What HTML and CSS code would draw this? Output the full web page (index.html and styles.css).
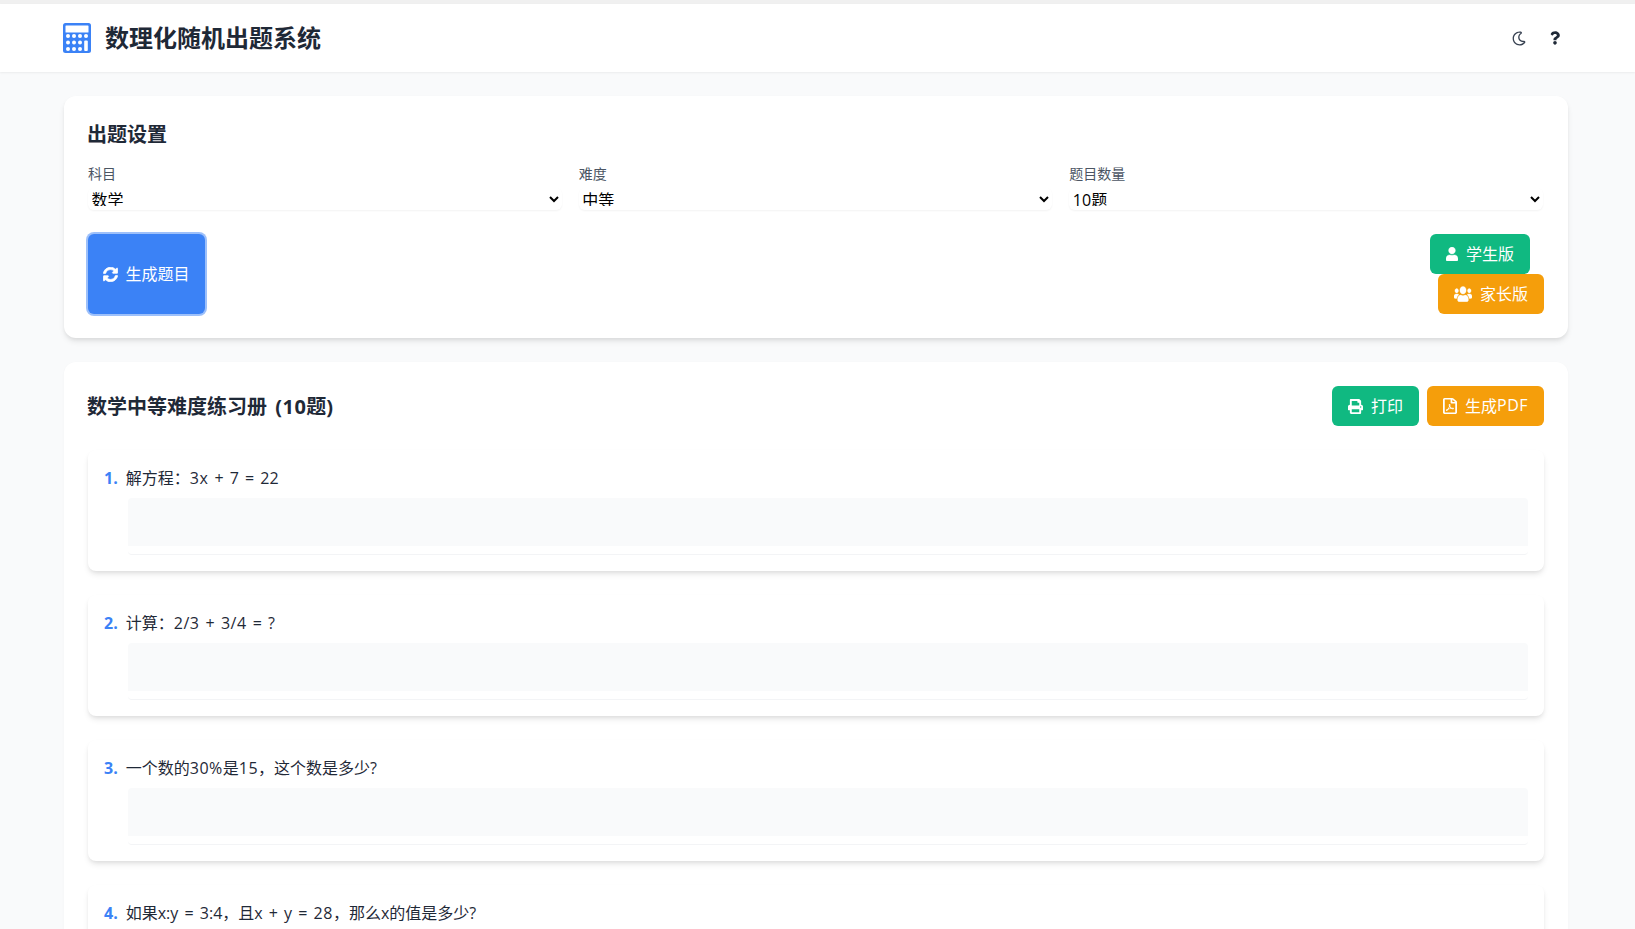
FILE: index.html
```html
<!DOCTYPE html>
<html lang="zh-CN">
<head>
<meta charset="utf-8">
<title>数理化随机出题系统</title>
<link rel="stylesheet" href="styles.css">
</head>
<body>
<div class="topstrip"></div>
<header class="site-header">
  <div class="brand">
    <svg class="brand-icon" viewBox="0 0 28 30"><rect class="calc-body" width="28" height="30" rx="2.500"/><rect class="calc-face" x="2.500" y="2.500" width="23" height="7" rx=".6"/><g class="calc-face"><circle cx="5" cy="13" r="2"/><circle cx="11" cy="13" r="2"/><circle cx="17" cy="13" r="2"/><circle cx="23" cy="13" r="2"/><circle cx="5" cy="19.500" r="2"/><circle cx="11" cy="19.500" r="2"/><circle cx="17" cy="19.500" r="2"/><circle cx="5" cy="26" r="2"/><circle cx="11" cy="26" r="2"/><circle cx="17" cy="26" r="2"/><rect x="21.200" y="17.600" width="3.600" height="10.300" rx="1"/></g></svg>
    <h1 class="brand-title">数理化随机出题系统</h1>
  </div>
  <div class="header-tools">
    <svg class="tool-moon" viewBox="0 0 512 512"><path d="M279.135 512c78.756 0 150.982-35.804 198.844-94.775 28.27-34.831-2.558-85.722-46.249-77.401-82.348 15.683-158.272-47.268-158.272-130.792 0-48.424 26.06-92.292 67.434-115.836 38.745-22.05 28.999-80.788-15.022-88.919A257.936 257.936 0 0 0 279.135 0c-141.36 0-256 114.575-256 256 0 141.36 114.576 256 256 256zm0-464c12.985 0 25.689 1.201 38.016 3.478-54.76 31.163-91.693 90.042-91.693 157.554 0 113.848 103.641 199.2 215.252 177.944C402.574 433.964 344.366 464 279.135 464c-114.875 0-208-93.125-208-208s93.125-208 208-208z"/></svg>
    <svg class="tool-help" viewBox="0 0 384 512"><path d="M202.021 0C122.202 0 70.503 32.703 29.914 91.026c-7.363 10.58-5.093 25.086 5.178 32.874l43.138 32.709c10.373 7.865 25.132 6.026 33.253-4.148 25.049-31.381 43.63-49.449 82.757-49.449 30.764 0 68.816 19.799 68.816 49.631 0 22.552-18.617 34.134-48.993 51.164-35.423 19.86-82.299 44.576-82.299 106.405V320c0 13.255 10.745 24 24 24h72.471c13.255 0 24-10.745 24-24v-5.773c0-42.86 125.268-44.645 125.268-160.627C377.504 66.256 286.902 0 202.021 0zM192 373.459c-38.196 0-69.271 31.075-69.271 69.271 0 38.195 31.075 69.27 69.271 69.27s69.271-31.075 69.271-69.271-31.075-69.27-69.271-69.27z"/></svg>
  </div>
</header>
<main class="page">
  <section class="card settings">
    <h2 class="card-title">出题设置</h2>
    <div class="fields">
      <div class="field"><label class="field-label">科目</label><select class="field-select"><option>数学</option></select></div>
      <div class="field"><label class="field-label">难度</label><select class="field-select"><option>中等</option></select></div>
      <div class="field"><label class="field-label">题目数量</label><select class="field-select"><option>10题</option></select></div>
    </div>
    <div class="actions">
      <button class="btn btn-generate"><svg class="ico ico-sync" viewBox="0 0 512 512"><path d="M370.72 133.28C339.458 104.008 298.888 87.962 255.848 88c-77.458.068-144.328 53.178-162.791 126.85-1.344 5.363-6.122 9.15-11.651 9.15H24.103c-7.498 0-13.194-6.807-11.807-14.176C33.933 94.924 134.813 8 256 8c66.448 0 126.791 26.136 171.315 68.685L463.03 40.97C478.149 25.851 504 36.559 504 57.941V192c0 13.255-10.745 24-24 24H345.941c-21.382 0-32.09-25.851-16.971-40.971l41.75-41.749zM32 296h134.059c21.382 0 32.09 25.851 16.971 40.971l-41.75 41.75c31.262 29.273 71.835 45.319 114.876 45.28 77.418-.07 144.315-53.144 162.787-126.849 1.344-5.363 6.122-9.15 11.651-9.15h57.304c7.498 0 13.194 6.807 11.807 14.176C478.067 417.076 377.187 504 256 504c-66.448 0-126.791-26.136-171.315-68.685L48.97 471.03C33.851 486.149 8 475.441 8 454.059V320c0-13.255 10.745-24 24-24z"/></svg>生成题目</button>
      <div class="version-btns">
        <button class="btn btn-green btn-student"><svg class="ico ico-user" viewBox="0 0 448 512" preserveAspectRatio="none"><path d="M224 256c70.700 0 128-57.300 128-128S294.700 0 224 0 96 57.300 96 128s57.300 128 128 128zm89.600 32h-16.700c-22.200 10.200-46.900 16-72.900 16s-50.600-5.800-72.900-16h-16.700C60.200 288 0 348.200 0 422.400V464c0 26.500 21.500 48 48 48h352c26.500 0 48-21.500 48-48v-41.600c0-74.200-60.200-134.400-134.400-134.400z"/></svg>学生版</button>
        <button class="btn btn-amber"><svg class="ico ico-users" viewBox="0 20 640 470" preserveAspectRatio="none"><path d="M96 224c35.300 0 64-28.700 64-64s-28.700-64-64-64-64 28.700-64 64 28.700 64 64 64zm448 0c35.300 0 64-28.700 64-64s-28.700-64-64-64-64 28.700-64 64 28.700 64 64 64zm32 32h-64c-17.600 0-33.500 7.100-45.100 18.600 40.300 22.100 68.900 62 75.100 109.400h66c17.700 0 32-14.300 32-32v-32c0-35.300-28.700-64-64-64zm-256 0c61.900 0 112-50.100 112-112S381.900 32 320 32 208 82.100 208 144s50.100 112 112 112zm76.800 32h-8.300c-20.800 10-43.900 16-68.500 16s-47.600-6-68.500-16h-8.300C179.600 288 128 339.600 128 403.200V432c0 26.500 21.500 48 48 48h288c26.500 0 48-21.500 48-48v-28.800c0-63.600-51.600-115.200-115.200-115.200zm-223.700-13.400C161.500 263.100 145.600 256 128 256H64c-35.300 0-64 28.700-64 64v32c0 17.700 14.300 32 32 32h65.900c6.300-47.400 34.900-87.300 75.200-109.400z"/></svg>家长版</button>
      </div>
    </div>
  </section>
  <section class="card paper">
    <div class="paper-head">
      <h2 class="card-title paper-title">数学中等难度练习册 <span class="latin-wide">(10</span>题)</h2>
      <div class="paper-btns">
        <button class="btn btn-green"><svg class="ico ico-print" viewBox="0 0 512 512"><path d="M448 192V77.250c0-8.490-3.370-16.620-9.370-22.630L393.370 9.370c-6-6-14.140-9.370-22.630-9.370H96C78.330 0 64 14.330 64 32v160c-35.350 0-64 28.650-64 64v112c0 8.840 7.160 16 16 16h48v96c0 17.670 14.330 32 32 32h320c17.670 0 32-14.330 32-32v-96h48c8.840 0 16-7.160 16-16V256c0-35.350-28.650-64-64-64zm-64 256H128v-96h256v96zm0-224H128V64h192v48c0 8.840 7.160 16 16 16h48v96zm48 72c-13.250 0-24-10.750-24-24 0-13.260 10.750-24 24-24s24 10.740 24 24c0 13.250-10.750 24-24 24z"/></svg>打印</button>
        <button class="btn btn-amber"><svg class="ico ico-pdf" viewBox="0 0 384 512" preserveAspectRatio="none"><path d="M369.900 97.900L286 14C277 5 264.800-.1 252.100-.1H48C21.500 0 0 21.500 0 48v416c0 26.500 21.500 48 48 48h288c26.500 0 48-21.500 48-48V131.900c0-12.700-5.100-25-14.100-34zM332.100 128H256V51.900l76.100 76.100zM48 464V48h160v104c0 13.300 10.700 24 24 24h104v288H48zm250.200-143.700c-12.200-12-47-8.700-64.400-6.500-17.200-10.500-28.700-25-36.800-46.300 3.900-16.100 10.100-40.600 5.400-56-4.200-26.200-37.800-23.600-42.600-5.900-4.400 16.100-.4 38.500 7 67.100-10 23.900-24.900 56-35.400 74.400-20 10.300-47 26.200-51 46.200-3.300 15.800 26 55.200 76.100-31.200 22.400-7.400 46.800-16.500 68.400-20.100 18.900 10.200 41 17 55.800 17 25.500 0 28-28.200 17.500-38.700zm-198.100 77.800c5.100-13.700 24.500-29.500 30.400-35-19 30.300-30.400 35.700-30.400 35zm81.600-190.600c7.400 0 6.700 32.100 1.800 40.800-4.400-13.900-4.300-40.800-1.800-40.800zm-24.400 136.600c9.700-16.900 18-37 24.700-54.700 8.300 15.100 18.900 27.200 30.100 35.500-20.800 4.300-38.900 13.100-54.800 19.200zm131.600-5s-5 6-37.300-7.800c35.100-2.600 40.900 5.400 37.300 7.800z"/></svg>生成<span class="latin-wide">PDF</span></button>
      </div>
    </div>
    <div class="questions">
      <article class="question"><p class="q-line"><span class="q-num">1.</span>解方程：<span class="latin-wide">3x</span> + 7 = 22</p><div class="q-answer"></div></article>
      <article class="question"><p class="q-line"><span class="q-num">2.</span>计算：<span class="latin-wide">2/3</span> + <span class="latin-wide">3/4</span> = ?</p><div class="q-answer"></div></article>
      <article class="question"><p class="q-line"><span class="q-num">3.</span>一个数的<span class="latin-wide">30%</span>是<span class="latin-wide">15</span>，这个数是多少?</p><div class="q-answer"></div></article>
      <article class="question"><p class="q-line"><span class="q-num">4.</span>如果x:y = 3:4，且x + y = <span class="latin-wide">28</span>，那么x的值是多少?</p><div class="q-answer"></div></article>
    </div>
  </section>
</main>
</body>
</html>
```

FILE: styles.css
```css
* { box-sizing: border-box; }
html, body { margin: 0; padding: 0; }
body {
  background: #f9fafb;
  color: #1f2937;
  font-family: "Open Sans", "Noto Sans CJK SC", sans-serif;
  font-size: 16px;
}
.topstrip { height: 4px; background: #f0f0f0; }
.site-header {
  height: 68px;
  background: #fff;
  box-shadow: 0 1px 2px rgba(0,0,0,.06);
  display: flex;
  align-items: center;
  justify-content: space-between;
  padding: 0 64px 0 63px;
  position: relative;
}
.brand { display: flex; align-items: center; gap: 14px; }
.brand-icon { width: 28px; height: 30px; display: block; }
.calc-body { fill: #3b82f6; }
.calc-face { fill: #fff; }
.brand-title { margin: 0; font-size: 24px; line-height: 32px; font-weight: 700; color: #1f2937; }
.header-tools { display: flex; align-items: center; gap: 24px; margin-right: 11px; }
.tool-moon { width: 14px; height: 15px; fill: #374151; display: block; }
.tool-help { width: 10px; height: 14px; fill: #1f2937; display: block; }
.page { width: 1504px; margin-left: 64px; padding-top: 24px; }
.card {
  background: #fff;
  border-radius: 12px;
  padding: 24px;
  margin-bottom: 24px;
  box-shadow: 0 4px 6px -1px rgba(0,0,0,.1), 0 2px 4px -1px rgba(0,0,0,.06);
}
.paper { box-shadow: 0 1px 3px rgba(0,0,0,.03); }
.card-title {
  margin: 0 0 15px -1px;
  padding-top: 1px;
  font-size: 20px;
  line-height: 28px;
  font-weight: 700;
  color: #1f2937;
  word-spacing: 3px;
}
.fields { display: grid; grid-template-columns: repeat(3, 1fr); gap: 16px; margin-bottom: 24px; }
.field { display: flex; flex-direction: column; }
.field-label { font-size: 14px; line-height: 20px; color: #4b5563; margin-bottom: 4px; }
.field-select {
  height: 22px;
  width: calc(100% - 1px);
  border: 0;
  background: #fff;
  border-radius: 6px;
  font-family: inherit;
  font-size: 16px;
  color: #000;
  padding: 0 0 4px;
  text-indent: -.5px;
  box-shadow: 0 1px 2px rgba(0,0,0,.05);
}
.actions { display: flex; justify-content: space-between; }
.version-btns { display: flex; flex-direction: column; align-items: flex-end; }
.btn {
  display: inline-flex;
  align-items: center;
  justify-content: center;
  height: 40px;
  padding: 0 16px 2px;
  border: 0;
  border-radius: 6px;
  color: #fff;
  font-family: inherit;
  font-size: 16px;
  white-space: nowrap;
}
.ico { width: 16px; height: 16px; fill: #fff; margin: 2px 8px 0 0; display: block; flex: none; }
.ico-sync { width: 15px; height: 15px; margin-right: 7px; stroke: #fff; stroke-width: 24px; }
.ico-user { width: 12px; height: 14px; stroke: #fff; stroke-width: 12px; }
.ico-users { width: 18px; height: 16px; stroke: #fff; stroke-width: 10px; }
.ico-print { width: 15px; height: 15px; }
.ico-pdf { width: 14px; height: 16px; }
.latin-wide { letter-spacing: .5px; }
.btn-generate { width: 117px; height: 80px; padding: 0 0 2px; background: #3b82f6; box-shadow: 0 0 0 2px rgba(59,130,246,.5); }
.btn-green { background: #10b981; }
.btn-amber { background: #f59e0b; }
.btn-student { margin-right: 14px; }
.paper-head { display: flex; justify-content: space-between; align-items: center; margin-bottom: 24px; }
.paper-title { margin-bottom: 0; }
.paper-btns { display: flex; gap: 8px; }
.questions { display: flex; flex-direction: column; gap: 24px; }
.question {
  background: #fff;
  border-radius: 8px;
  padding: 16px;
  box-shadow: 0 4px 6px -1px rgba(0,0,0,.1), 0 2px 4px -1px rgba(0,0,0,.06);
}
.q-line { margin: 0; line-height: 24px; color: #1f2937; word-spacing: 2px; }
.q-num { color: #3b82f6; font-weight: 700; margin-right: 8px; }
.q-answer {
  margin: 8px 0 0 24px;
  height: 57px;
  padding-bottom: 8px;
  border-bottom: 1px solid #f3f4f6;
  background: #f9fafb content-box;
  border-radius: 4px;
}
```
